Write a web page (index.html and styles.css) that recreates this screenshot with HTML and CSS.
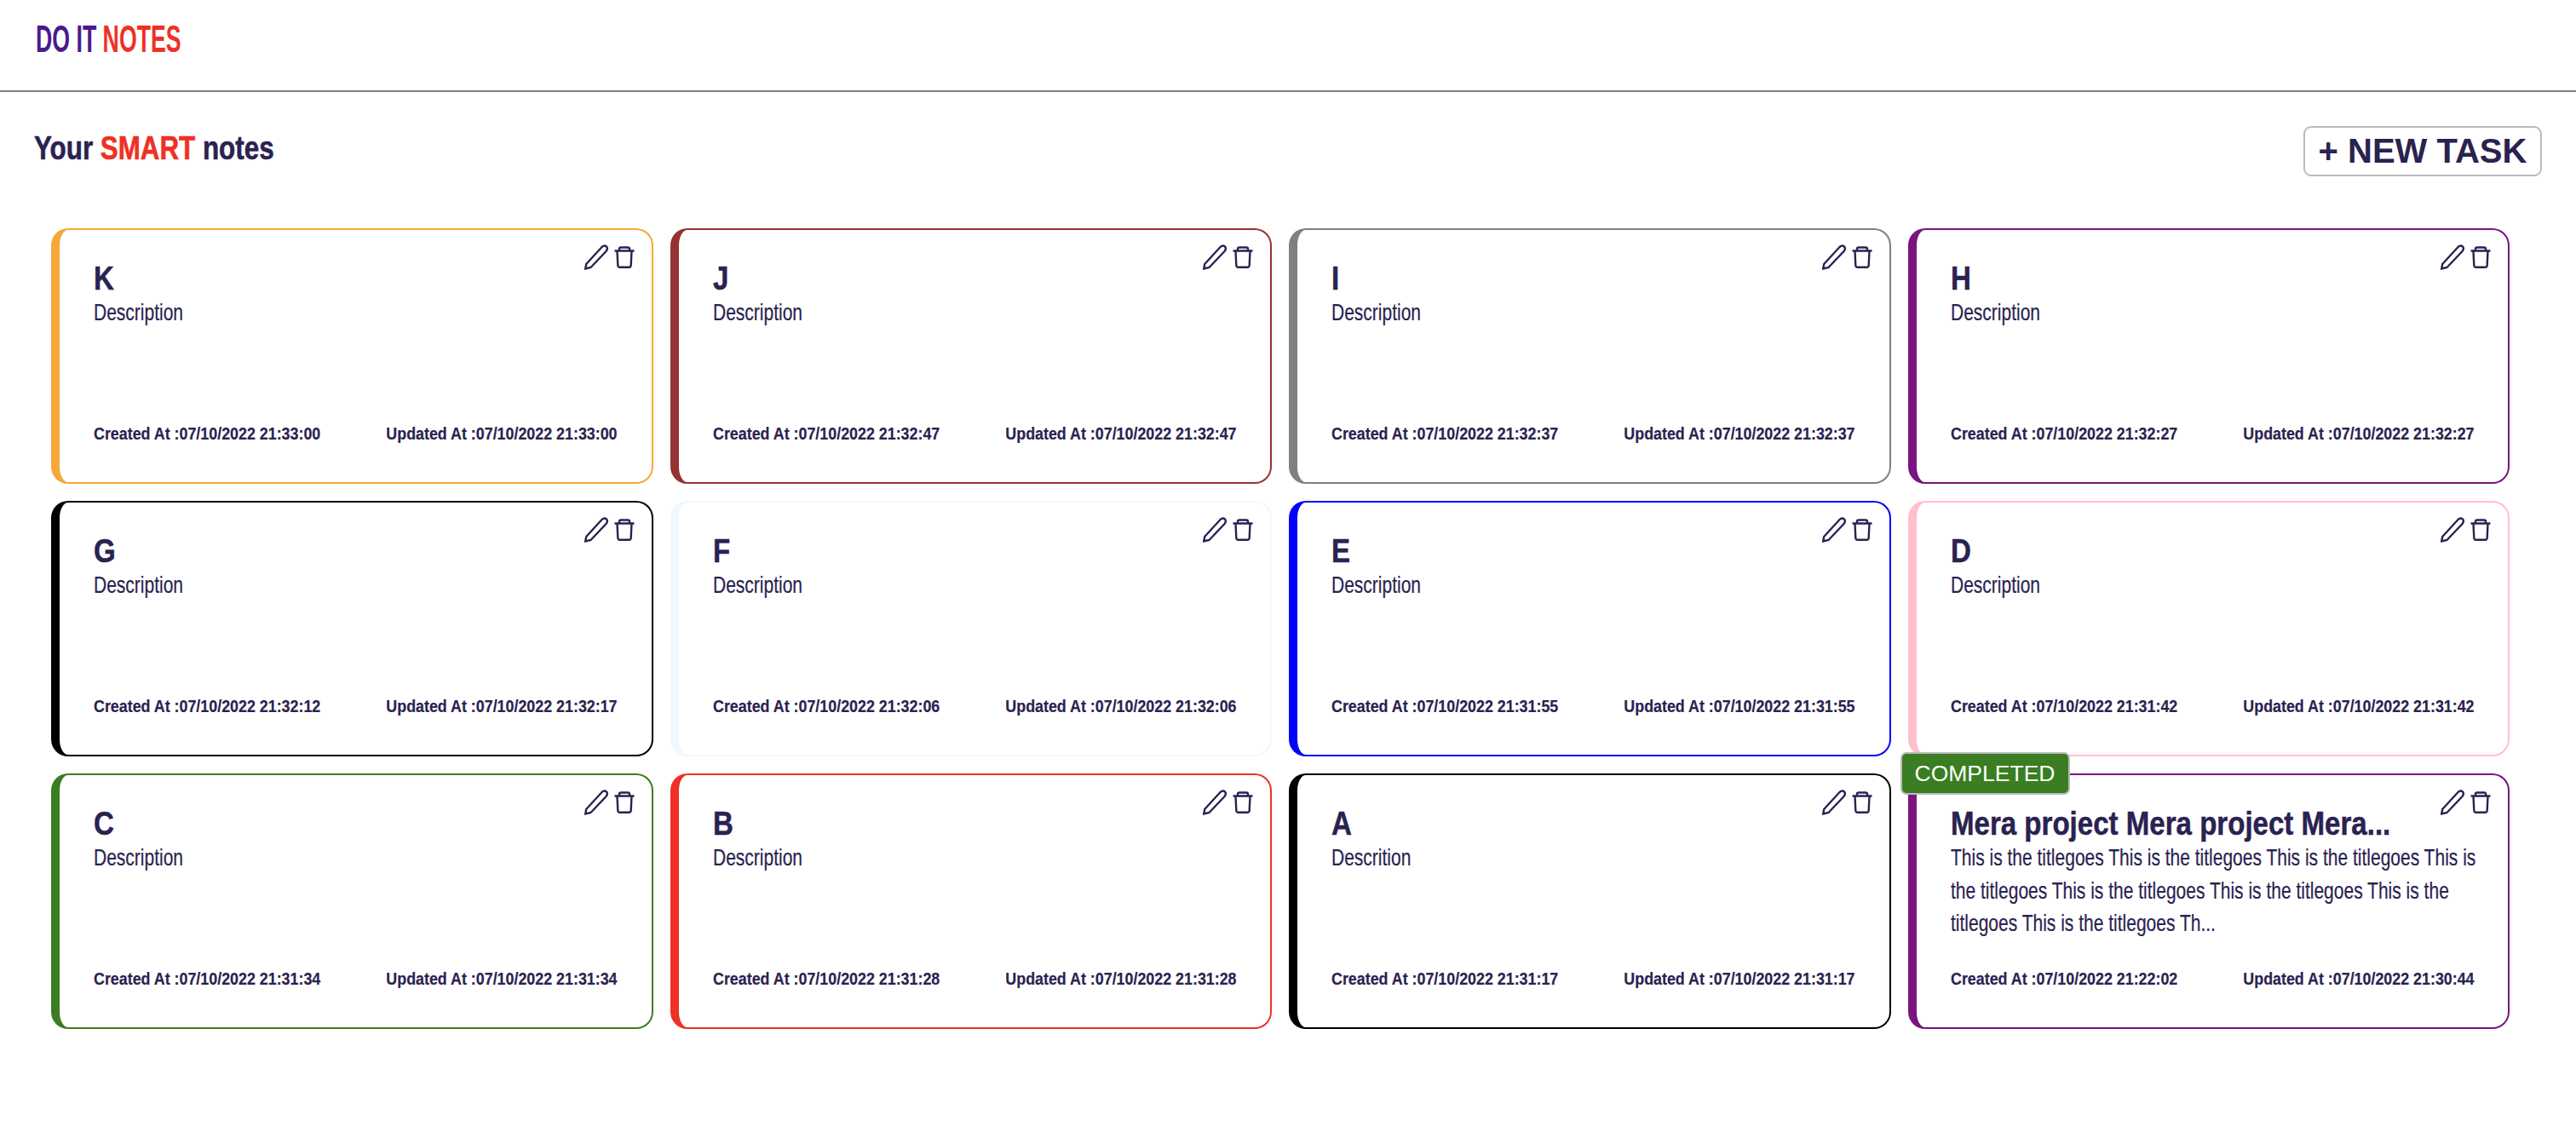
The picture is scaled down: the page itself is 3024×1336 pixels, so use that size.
FILE: index.html
```html
<!DOCTYPE html>
<html lang="en">

<head>
  <meta charset="UTF-8" />
  <title>Do It Notes</title>
  <link rel="stylesheet" href="styles.css">
</head>

<body>
  <header class="topbar">
    <div class="logo">DO IT <span class="red">NOTES</span></div>
  </header>

  <div class="page-head">
    <h1 class="page-title">Your <span class="red">SMART</span> notes</h1>
    <button class="new-task">+ NEW TASK</button>
  </div>

  <main class="grid" id="grid"></main>

  <template id="card-tpl">
    <article class="card">
      <div class="actions">
        <svg class="pencil" viewBox="0 0 28 30"><path d="M1.200 28.500 L2.200 23 L20.500 3 Q23.500 0.500 26 2.500 Q28 5 25.500 8 L7.500 27 Z" /></svg>
        <svg class="trash" viewBox="0 0 24 26"><path d="M6 5.500 V3 Q6 1.500 8 1.500 H16 Q18 1.500 18 3 V5.500 M0.500 5.500 H23.500 M3.500 5.500 L4.300 22.500 Q4.500 24.800 6.500 24.800 H17.500 Q19.500 24.800 19.700 22.500 L20.500 5.500" /></svg>
      </div>
      <h3 class="card-title"></h3>
      <p class="card-desc"></p>
      <div class="card-foot">
        <span class="created"></span>
        <span class="updated"></span>
      </div>
    </article>
  </template>

  <script>
    const notes = [
      ["orange", "K", "Description", "21:33:00", "21:33:00"],
      ["brown", "J", "Description", "21:32:47", "21:32:47"],
      ["grey", "I", "Description", "21:32:37", "21:32:37"],
      ["purple", "H", "Description", "21:32:27", "21:32:27"],
      ["black", "G", "Description", "21:32:12", "21:32:17"],
      ["alice", "F", "Description", "21:32:06", "21:32:06"],
      ["blue", "E", "Description", "21:31:55", "21:31:55"],
      ["pink", "D", "Description", "21:31:42", "21:31:42"],
      ["green", "C", "Description", "21:31:34", "21:31:34"],
      ["redline", "B", "Description", "21:31:28", "21:31:28"],
      ["black", "A", "Descrition", "21:31:17", "21:31:17"],
      ["purple", "Mera project Mera project Mera...", "This is the titlegoes This is the titlegoes This is the titlegoes This is the titlegoes This is the titlegoes This is the titlegoes This is the titlegoes This is the titlegoes Th...", "21:22:02", "21:30:44"]
    ];
    const grid = document.getElementById("grid");
    const tpl = document.getElementById("card-tpl");
    notes.forEach(function (n) {
      const card = tpl.content.cloneNode(true).querySelector(".card");
      card.classList.add(n[0]);
      card.querySelector(".card-title").textContent = n[1];
      card.querySelector(".card-desc").textContent = n[2];
      card.querySelector(".created").textContent = "Created At :07/10/2022 " + n[3];
      card.querySelector(".updated").textContent = "Updated At :07/10/2022 " + n[4];
      if (n[1].length > 1) {
        const badge = document.createElement("div");
        badge.className = "badge";
        badge.textContent = "COMPLETED";
        card.appendChild(badge);
      }
      grid.appendChild(card);
    });
  </script>
</body>

</html>
```
FILE: styles.css
```css
body {
  margin: 0;
  background: #fff;
  color: #2a2250;
  font-family: 'Liberation Sans', sans-serif;
}

.red {
  color: #ee3124;
}

.topbar {
  height: 106px;
  padding-left: 42px;
  border-bottom: 2px solid #808080;
}

.logo {
  display: inline-block;
  padding-top: 21px;
  font-size: 44.500px;
  line-height: 50px;
  font-weight: 700;
  color: #4a1a8c;
  transform: scaleX(.6);
  transform-origin: left;
  white-space: nowrap;
}

.page-head {
  display: flex;
  justify-content: space-between;
  align-items: flex-start;
  padding: 40px 40px 0 40px;
  height: 120px;
}

.page-title {
  margin: 4px 0 0;
  font-size: 38px;
  line-height: 44px;
  font-weight: 700;
  -webkit-text-stroke: .6px currentColor;
  transform: scaleX(.825);
  transform-origin: left;
  white-space: nowrap;
}

.new-task {
  width: 280px;
  height: 59px;
  padding: 0;
  background: #fff;
  border: 2px solid #bbb;
  border-radius: 9px;
  color: #2a2250;
  font-family: 'Liberation Sans', sans-serif;
  font-size: 40px;
  font-weight: 700;
  cursor: pointer;
}

.grid {
  display: grid;
  grid-template-columns: repeat(4, minmax(0, 1fr));
  grid-auto-rows: 300px;
  gap: 20px;
  padding: 0 78px 0 60px;
}

.card {
  position: relative;
  display: flex;
  flex-direction: column;
  border: 2px solid #000;
  border-left-width: 10px;
  border-radius: 20px;
  padding: 37px 40px 45px 40px;
}

.orange { border-color: #f4a93a; }
.brown { border-color: #963232; }
.grey { border-color: #808080; }
.purple { border-color: #7a1480; }
.black { border-color: #000; }
.alice { border-color: #f0f8ff; }
.blue { border-color: #0000ff; }
.pink { border-color: #ffc0cb; }
.green { border-color: #3a7d22; }
.redline { border-color: #ee3124; }

.actions {
  position: absolute;
  top: 17px;
  right: 20px;
  display: flex;
  align-items: flex-start;
  gap: 7px;
}

.actions svg {
  fill: none;
  stroke: #2a2250;
  stroke-width: 2.400;
}

.pencil {
  width: 28px;
  height: 30px;
}

.trash {
  width: 24px;
  height: 26px;
  margin-top: 2px;
}

.card-title {
  margin: 0;
  font-size: 38px;
  line-height: 41px;
  font-weight: 700;
  -webkit-text-stroke: .5px currentColor;
  transform: scaleX(.87);
  transform-origin: left;
  white-space: nowrap;
}

.card-desc {
  margin: 0;
  width: 835px;
  font-size: 28px;
  line-height: 38.500px;
  -webkit-text-stroke: .2px currentColor;
  transform: scaleX(.75);
  transform-origin: left;
}

.card-foot {
  display: flex;
  justify-content: space-between;
  width: 723px;
  margin-top: auto;
  font-size: 21px;
  line-height: 24px;
  font-weight: 700;
  -webkit-text-stroke: .2px currentColor;
  transform: scaleX(.85);
  transform-origin: left;
  white-space: nowrap;
}

.badge {
  position: absolute;
  top: -27px;
  left: -19px;
  width: 199px;
  height: 50px;
  box-sizing: border-box;
  background: #3a7d22;
  border: 2px solid #bbb;
  border-radius: 7px;
  color: #fff;
  font-family: 'Liberation Sans', sans-serif;
  font-size: 26.500px;
  line-height: 46px;
  text-align: center;
}
```
